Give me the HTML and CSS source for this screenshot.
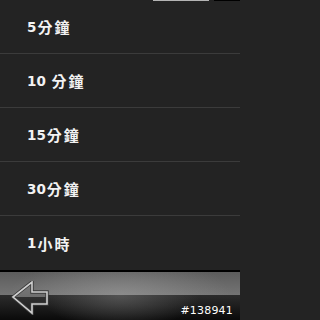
FILE: index.html
```html
<!DOCTYPE html>
<html>
<head>
<meta charset="utf-8">
<link rel="stylesheet" href="styles.css">
</head>
<body>
<div class="screen">
  <div class="topstrip"><span class="pill"></span><span class="blk"></span></div>
  <ul class="list">
    <li class="row">5<span class="u">分鐘</span></li>
    <li class="row">10 <span class="u">分鐘</span></li>
    <li class="row">15<span class="u">分鐘</span></li>
    <li class="row">30<span class="u">分鐘</span></li>
    <li class="row last">1<span class="u">小時</span></li>
  </ul>
  <div class="bar">
    <div class="bar-top"></div>
    <div class="bar-bottom"></div>
    <svg class="back" width="40" height="34" viewBox="0 0 40 34">
      <defs>
        <linearGradient id="af" x1="0" y1="0" x2="0" y2="1">
          <stop offset="0" stop-color="#7a7a7a"/>
          <stop offset="0.48" stop-color="#6e6e6e"/>
          <stop offset="0.48" stop-color="#303030"/>
          <stop offset="1" stop-color="#1e1e1e"/>
        </linearGradient>
      </defs>
      <polygon points="2,16 21,1 21,11 36,11 36,23 21,23 21,32" fill="url(#af)" stroke="#3a3a3a" stroke-width="3.4" stroke-linejoin="miter"/>
      <polygon points="2,16 21,1 21,11 36,11 36,23 21,23 21,32" fill="none" stroke="#cfcfcf" stroke-width="1.6" stroke-linejoin="miter"/>
    </svg>
    <span class="code">#138941</span>
  </div>
</div>
</body>
</html>
```
FILE: styles.css
```css
html, body {
  margin: 0;
  padding: 0;
  background: #232323;
}
.screen {
  width: 240px;
  height: 320px;
  display: flex;
  flex-direction: column;
  background: #232323;
  position: relative;
  overflow: hidden;
}
.topstrip {
  height: 0;
  position: relative;
}
.topstrip .pill {
  position: absolute;
  right: 31px;
  top: 0;
  width: 56px;
  height: 1px;
  background: #b4b4b4;
}
.topstrip .blk {
  position: absolute;
  right: 0;
  top: 0;
  width: 26px;
  height: 1px;
  background: #000;
}
.list {
  list-style: none;
  margin: 0;
  padding: 0;
  display: flex;
  flex-direction: column;
}
.row {
  height: 53px;
  border-bottom: 1px solid #3b3b3b;
  display: flex;
  align-items: center;
  padding-left: 27px;
  color: #f2f2f2;
  font-family: "DejaVu Sans", "Noto Sans CJK TC", sans-serif;
  font-weight: bold;
  font-size: 13.5px;
  white-space: pre;
}
.row .u {
  font-family: "Noto Sans CJK TC", sans-serif;
  font-size: 15px;
  letter-spacing: 2px;
  margin-left: 1px;
}
.row.last {
  height: 54px;
  border-bottom: 2px solid #000;
}
.bar {
  flex: 1;
  display: flex;
  flex-direction: column;
  position: relative;
  background: #000;
}
.bar-top {
  height: 23px;
  background:
    radial-gradient(ellipse 110px 40px at 50% 100%, rgba(170,170,170,0.45), rgba(170,170,170,0) 100%),
    linear-gradient(to bottom, #5c5c5c, #747474);
}
.bar-bottom {
  flex: 1;
  background:
    radial-gradient(ellipse 80px 34px at 50% 0%, rgba(110,110,110,0.6), rgba(90,90,90,0) 100%),
    linear-gradient(to bottom, #2c2c2c, #0a0a0a);
}
.back {
  position: absolute;
  left: 11px;
  top: 9px;
}
.code {
  position: absolute;
  right: 7px;
  bottom: 3px;
  color: #ffffff;
  font-family: "DejaVu Sans", sans-serif;
  font-size: 11px;
  letter-spacing: 0.2px;
}
```
